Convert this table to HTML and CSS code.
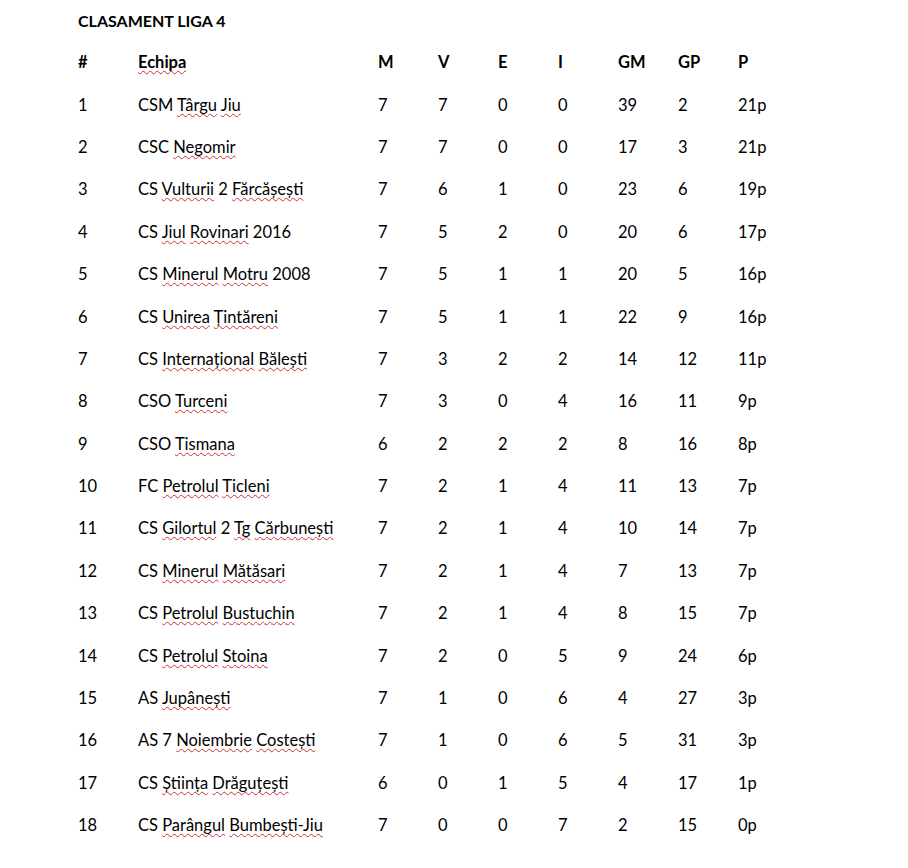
FILE: index.html
```html
<!DOCTYPE html>
<html lang="ro">
<head>
<meta charset="utf-8">
<link rel="stylesheet" href="styles.css">
</head>
<body>
<div class="page">
  <div class="title">CLASAMENT LIGA 4</div>
  <div class="table">
    <div class="row head"><span>#</span><span><u>Echipa</u></span><span>M</span><span>V</span><span>E</span><span>I</span><span>GM</span><span>GP</span><span>P</span></div>
    <div class="row"><span>1</span><span>CSM <u>Târgu</u> <u>Jiu</u></span><span>7</span><span>7</span><span>0</span><span>0</span><span>39</span><span>2</span><span>21p</span></div>
    <div class="row"><span>2</span><span>CSC <u>Negomir</u></span><span>7</span><span>7</span><span>0</span><span>0</span><span>17</span><span>3</span><span>21p</span></div>
    <div class="row"><span>3</span><span>CS <u>Vulturii</u> 2 <u>Fărcășești</u></span><span>7</span><span>6</span><span>1</span><span>0</span><span>23</span><span>6</span><span>19p</span></div>
    <div class="row"><span>4</span><span>CS <u>Jiul</u> <u>Rovinari</u> 2016</span><span>7</span><span>5</span><span>2</span><span>0</span><span>20</span><span>6</span><span>17p</span></div>
    <div class="row"><span>5</span><span>CS <u>Minerul</u> <u>Motru</u> 2008</span><span>7</span><span>5</span><span>1</span><span>1</span><span>20</span><span>5</span><span>16p</span></div>
    <div class="row"><span>6</span><span>CS <u>Unirea</u> <u>Țintăreni</u></span><span>7</span><span>5</span><span>1</span><span>1</span><span>22</span><span>9</span><span>16p</span></div>
    <div class="row"><span>7</span><span>CS <u>Internațional</u> <u>Bălești</u></span><span>7</span><span>3</span><span>2</span><span>2</span><span>14</span><span>12</span><span>11p</span></div>
    <div class="row"><span>8</span><span>CSO <u>Turceni</u></span><span>7</span><span>3</span><span>0</span><span>4</span><span>16</span><span>11</span><span>9p</span></div>
    <div class="row"><span>9</span><span>CSO <u>Tismana</u></span><span>6</span><span>2</span><span>2</span><span>2</span><span>8</span><span>16</span><span>8p</span></div>
    <div class="row"><span>10</span><span>FC <u>Petrolul</u> <u>Ticleni</u></span><span>7</span><span>2</span><span>1</span><span>4</span><span>11</span><span>13</span><span>7p</span></div>
    <div class="row"><span>11</span><span>CS <u>Gilortul</u> 2 <u>Tg</u> <u>Cărbunești</u></span><span>7</span><span>2</span><span>1</span><span>4</span><span>10</span><span>14</span><span>7p</span></div>
    <div class="row"><span>12</span><span>CS <u>Minerul</u> <u>Mătăsari</u></span><span>7</span><span>2</span><span>1</span><span>4</span><span>7</span><span>13</span><span>7p</span></div>
    <div class="row"><span>13</span><span>CS <u>Petrolul</u> <u>Bustuchin</u></span><span>7</span><span>2</span><span>1</span><span>4</span><span>8</span><span>15</span><span>7p</span></div>
    <div class="row"><span>14</span><span>CS <u>Petrolul</u> <u>Stoina</u></span><span>7</span><span>2</span><span>0</span><span>5</span><span>9</span><span>24</span><span>6p</span></div>
    <div class="row"><span>15</span><span>AS <u>Jupânești</u></span><span>7</span><span>1</span><span>0</span><span>6</span><span>4</span><span>27</span><span>3p</span></div>
    <div class="row"><span>16</span><span>AS 7 <u>Noiembrie</u> <u>Costești</u></span><span>7</span><span>1</span><span>0</span><span>6</span><span>5</span><span>31</span><span>3p</span></div>
    <div class="row"><span>17</span><span>CS <u>Știința</u> <u>Drăguțești</u></span><span>6</span><span>0</span><span>1</span><span>5</span><span>4</span><span>17</span><span>1p</span></div>
    <div class="row"><span>18</span><span>CS <u>Parângul</u> <u>Bumbești-Jiu</u></span><span>7</span><span>0</span><span>0</span><span>7</span><span>2</span><span>15</span><span>0p</span></div>
  </div>
</div>
</body>
</html>
```
FILE: styles.css
```css
html, body {
  margin: 0;
  padding: 0;
  background: #ffffff;
}
.page {
  padding-left: 78px;
  font-family: "Lato", "Open Sans", sans-serif;
  font-size: 16.5px;
  color: #000000;
}
.title {
  height: 41px;
  line-height: 41px;
  font-weight: bold;
  font-size: 16px;
}
.row {
  display: grid;
  grid-template-columns: 60px 240px 60px 60px 60px 60px 60px 60px 60px;
  height: 42.4px;
  align-items: center;
}
.head {
  font-weight: bold;
}
u {
  text-decoration: underline wavy #c83030;
  text-decoration-thickness: 1px;
  text-underline-offset: 2px;
  text-decoration-skip-ink: none;
}
```
